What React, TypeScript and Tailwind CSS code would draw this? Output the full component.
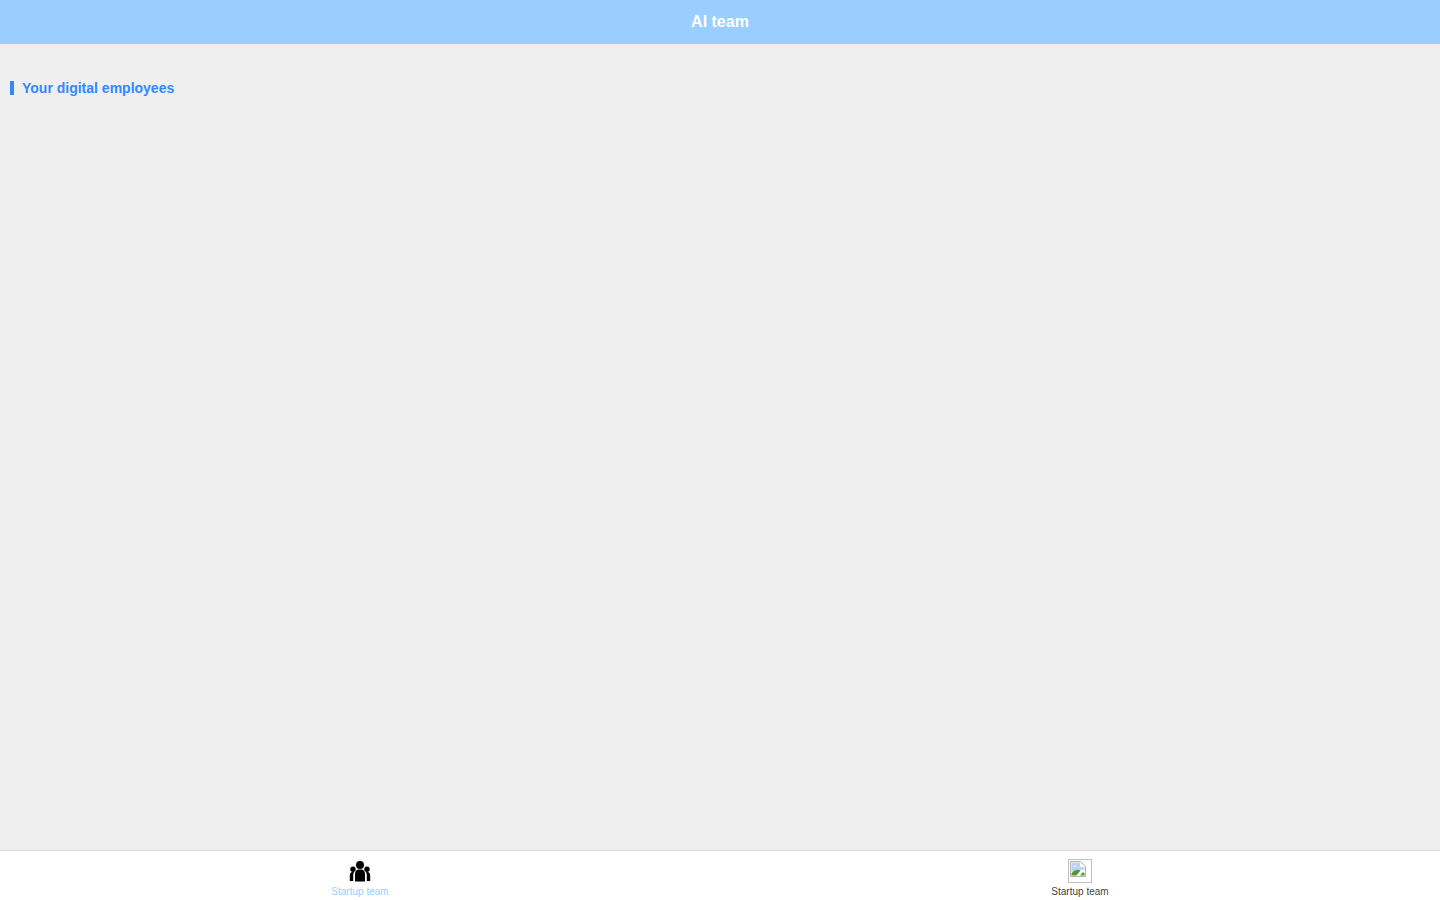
export default function App() {
  return (
    <div className="flex h-[900px] w-full flex-col overflow-hidden bg-[#efefef] font-['Liberation_Sans',Arial,sans-serif]">
      <header className="flex h-[44px] shrink-0 items-center justify-center bg-[#99ceff] text-[16px] font-bold text-white">
        AI team
      </header>
      <main className="flex-1 px-[10px] pt-[37px]">
        <div className="flex h-[14px] items-center border-l-4 border-[#3388ff] pl-[8px] text-[14px] font-bold text-[#3388ff]">
          Your digital employees
        </div>
      </main>
      <nav className="flex h-[50px] shrink-0 border-t border-[#dddddd] bg-white">
        <div className="flex flex-1 flex-col items-center pt-[8px]">
          <svg width="24" height="24" viewBox="0 0 24 24" fill="#000000">
            <circle cx="12" cy="6" r="4" />
            <circle cx="5" cy="10.2" r="2.7" />
            <circle cx="19" cy="10.2" r="2.7" />
            <path d="M7 22.5V15c0-2.6 1.7-4.4 3.6-4.4h2.8c1.9 0 3.6 1.8 3.6 4.4v7.5z" />
            <path d="M1.8 22v-5.6c0-2 1-3.4 2.6-3.4h1.6c-.5.9-.8 1.9-.8 3v6z" />
            <path d="M22.2 22v-5.6c0-2-1-3.4-2.6-3.4H18c.5.9.8 1.9.8 3v6z" />
          </svg>
          <span className="mt-[3px] text-[10px] leading-[12px] text-[#99ceff]">Startup team</span>
        </div>
        <div className="flex flex-1 flex-col items-center pt-[8px]">
          <div className="flex h-[24px] w-[24px] items-start justify-start border border-[#c0c0c0] p-[1px]">
            <svg width="16" height="16" viewBox="0 0 16 16">
              <path d="M0.5 0.5H10.5L15.5 5.5V15.5H0.5z" fill="#ffffff" stroke="#b0b0b0" strokeWidth="1" />
              <path d="M1.5 1.5H10V6H14.5V8.5L1.5 11z" fill="#bcd3f2" />
              <path d="M3 5.5c1-1.2 3-1.2 4 0z" fill="#ffffff" />
              <path d="M1.5 14.5V12.5C4 9 8 8 10.5 9.5L6.5 14.5z" fill="#4f9a2f" />
              <path d="M10 14.5L13 11L14.5 12.5V14.5z" fill="#4f9a2f" />
            </svg>
          </div>
          <span className="mt-[3px] text-[10px] leading-[12px] text-[#444444]">Startup team</span>
        </div>
      </nav>
    </div>
  );
}
